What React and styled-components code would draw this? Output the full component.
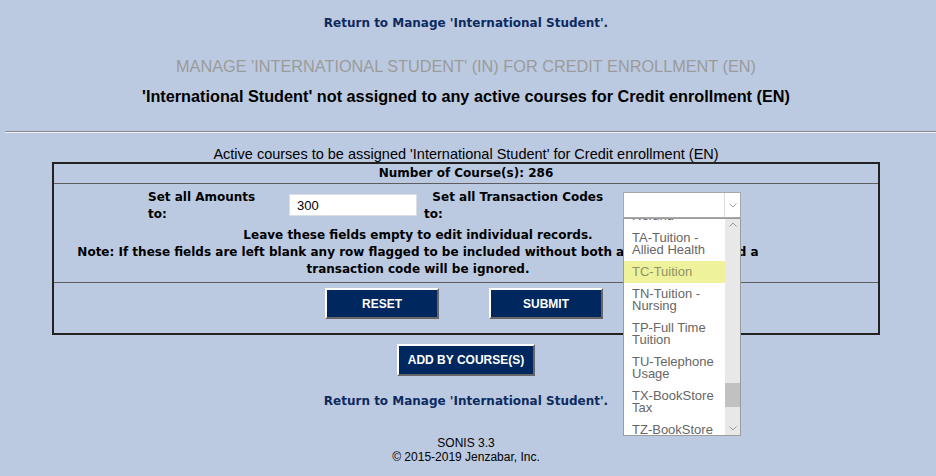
import styled, { createGlobalStyle } from "styled-components";

const GlobalStyle = createGlobalStyle`
  body {
    margin: 0;
    background-color: #bccae1;
    font-family: "DejaVu Sans", Verdana, sans-serif;
  }
`;

const Page = styled.div`
  display: flex;
  flex-direction: column;
  align-items: center;
  padding-right: 4px;
`;

const NavLink = styled.a`
  display: block;
  margin-top: ${(p) => p.top}px;
  font-size: 12px;
  font-weight: 700;
  line-height: 14px;
  color: #0d2b60;
  text-decoration: none;
  cursor: pointer;
`;

const Title = styled.div`
  margin-top: 27px;
  font-family: "Liberation Sans", Arial, sans-serif;
  font-size: 16.3px;
  line-height: 18px;
  color: #9b9b9b;
`;

const Subtitle = styled.div`
  margin-top: 12px;
  font-family: "Liberation Sans", Arial, sans-serif;
  font-size: 16.25px;
  font-weight: 700;
  line-height: 18px;
  color: #000;
`;

const Rule = styled.hr`
  align-self: stretch;
  margin: 26px -4px 0 5px;
  height: 0;
  border: none;
  border-top: 1px solid #8a8a8a;
  border-bottom: 1px solid #eef1f6;
`;

const Caption = styled.div`
  margin-top: 14px;
  font-family: "Liberation Sans", Arial, sans-serif;
  font-size: 14.5px;
  line-height: 15px;
  color: #000;
`;

const Panel = styled.div`
  width: 824px;
  border: 2px solid #222;
`;

const CountRow = styled.div`
  height: 19px;
  line-height: 19px;
  text-align: center;
  font-size: 12px;
  font-weight: 700;
  border-bottom: 1px solid #5e5e5e;
`;

const FieldsRow = styled.div`
  display: grid;
  grid-template-columns: 94px 141px 135px 199px 159px 96px;
  padding: 5px 0 4px;
  border-bottom: 1px solid #5e5e5e;
`;

const Label = styled.div`
  grid-column: ${(p) => p.col};
  width: ${(p) => p.width}px;
  font-size: 12px;
  font-weight: 700;
  line-height: 17px;
`;

const AmountInput = styled.input`
  grid-column: 3;
  box-sizing: border-box;
  width: 128px;
  height: 22px;
  margin-top: 5px;
  padding: 0 7px;
  border: 1px solid #d9dde4;
  background: #fff;
  font-family: "Liberation Sans", Arial, sans-serif;
  font-size: 13px;
  color: #000;
  outline: none;
`;

const SelectCell = styled.div`
  grid-column: 5;
  position: relative;
  margin-top: 3px;
`;

const SelectBox = styled.div`
  box-sizing: border-box;
  width: 118px;
  height: 26px;
  border: 1px solid #a8a8a8;
  background: #fff;
  display: flex;
  justify-content: flex-end;
`;

const SelectArrow = styled.div`
  width: 15px;
  border-left: 1px solid #dcdcdc;
  display: flex;
  align-items: center;
  justify-content: center;
`;

const ListBox = styled.div`
  position: absolute;
  top: 26px;
  left: 0;
  box-sizing: border-box;
  width: 118px;
  height: 218px;
  border: 1px solid #9c9c9c;
  background: #fff;
  display: flex;
  overflow: hidden;
  z-index: 5;
`;

const Options = styled.div`
  flex: 1;
  margin-top: -26px;
`;

const Option = styled.div`
  padding: 5px 4px 5px 8px;
  font-family: "Liberation Sans", Arial, sans-serif;
  font-size: 13px;
  line-height: 12px;
  color: ${(p) => (p.active ? "#8f9166" : "#666")};
  background: ${(p) => (p.active ? "#eef29b" : "transparent")};
`;

const Scrollbar = styled.div`
  width: 15px;
  background: #e8e8e8;
  display: flex;
  flex-direction: column;
  justify-content: space-between;
  align-items: center;
  padding: 3px 0 4px;
  position: relative;
`;

const Thumb = styled.div`
  position: absolute;
  left: 0;
  right: 0;
  top: 164px;
  height: 24px;
  background: #c1c1c1;
`;

const Note = styled.div`
  grid-column: 1 / 6;
  margin-top: 4px;
  text-align: center;
  font-size: 12px;
  font-weight: 700;
  line-height: 17px;
`;

const ButtonRow = styled.div`
  display: flex;
  justify-content: center;
  gap: 50px;
  padding: 5px 4px 14px 0;
`;

const Button = styled.button`
  box-sizing: border-box;
  width: ${(p) => (p.wide ? "auto" : "114px")};
  height: ${(p) => (p.wide ? 32 : 31)}px;
  margin-top: ${(p) => p.top || 0}px;
  padding: 0 ${(p) => (p.wide ? 9 : 7)}px;
  background: #00285f;
  color: #fff;
  font-family: "Liberation Sans", Arial, sans-serif;
  font-size: 12px;
  font-weight: 700;
  border: 2px solid;
  border-color: #fff #666 #666 #fff;
  cursor: pointer;
`;

const Footer = styled.div`
  margin-top: 28px;
  font-family: "Liberation Sans", Arial, sans-serif;
  font-size: 12px;
  line-height: 14px;
  text-align: center;
  color: #000;
`;

const Chevron = ({ up }) => (
  <svg width="8" height="5" viewBox="0 0 8 5">
    <path
      d={up ? "M0.5 4.5 L4 1 L7.5 4.5" : "M0.5 0.5 L4 4 L7.5 0.5"}
      fill="none"
      stroke="#9a9a9a"
      strokeWidth="1"
    />
  </svg>
);

const codes = [
  "RF-Tuition Refund",
  "TA-Tuition - Allied Health",
  "TC-Tuition",
  "TN-Tuition - Nursing",
  "TP-Full Time Tuition",
  "TU-Telephone Usage",
  "TX-BookStore Tax",
  "TZ-BookStore Supplies",
];

export default function App() {
  return (
    <>
      <GlobalStyle />
      <Page>
        <NavLink top={16}>Return to Manage 'International Student'.</NavLink>
        <Title>MANAGE 'INTERNATIONAL STUDENT' (IN) FOR CREDIT ENROLLMENT (EN)</Title>
        <Subtitle>
          'International Student' not assigned to any active courses for Credit
          enrollment (EN)
        </Subtitle>
        <Rule />
        <Caption>
          Active courses to be assigned 'International Student' for Credit
          enrollment (EN)
        </Caption>
        <Panel>
          <CountRow>Number of Course(s): 286</CountRow>
          <FieldsRow>
            <Label col={2} width={118}>
              Set all Amounts to:
            </Label>
            <AmountInput defaultValue="300" />
            <Label col={4} width={199}>
              &nbsp;&nbsp;Set all Transaction Codes to:
            </Label>
            <SelectCell>
              <SelectBox>
                <SelectArrow>
                  <Chevron />
                </SelectArrow>
              </SelectBox>
              <ListBox>
                <Options>
                  {codes.map((c) => (
                    <Option key={c} active={c === "TC-Tuition"}>
                      {c}
                    </Option>
                  ))}
                </Options>
                <Scrollbar>
                  <Chevron up />
                  <Thumb />
                  <Chevron />
                </Scrollbar>
              </ListBox>
            </SelectCell>
            <Note>
              Leave these fields empty to edit individual records.
              <br />
              Note: If these fields are left blank any row flagged to be
              included without both a valid amount and a transaction code will
              be ignored.
            </Note>
          </FieldsRow>
          <ButtonRow>
            <Button>RESET</Button>
            <Button>SUBMIT</Button>
          </ButtonRow>
        </Panel>
        <Button wide top={9}>
          ADD BY COURSE(S)
        </Button>
        <NavLink top={18}>Return to Manage 'International Student'.</NavLink>
        <Footer>
          SONIS 3.3
          <br />© 2015-2019 Jenzabar, Inc.
        </Footer>
      </Page>
    </>
  );
}
